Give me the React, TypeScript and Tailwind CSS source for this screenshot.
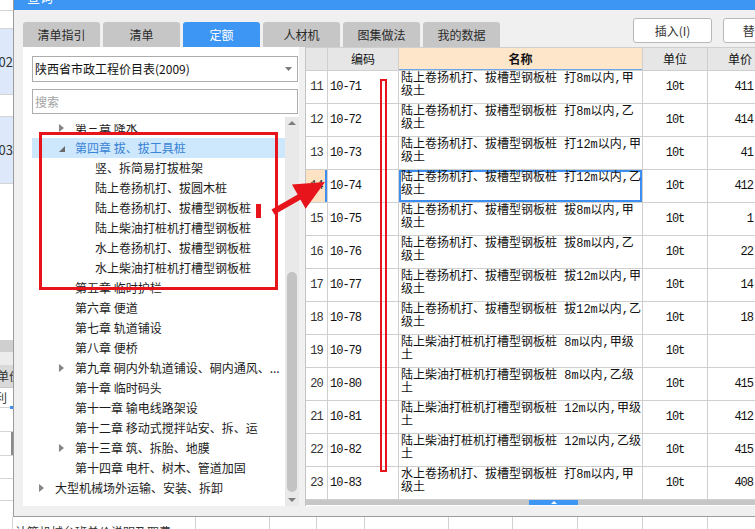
import React from 'react';

type TreeRow = {
  level: number;
  text: string;
  arrow?: 'right' | 'down';
  selected?: boolean;
};

const treeRows: TreeRow[] = [
  { level: 1, text: '第三章 降水', arrow: 'right' },
  { level: 1, text: '第四章 拔、拔工具桩', arrow: 'down', selected: true },
  { level: 2, text: '竖、拆简易打拔桩架' },
  { level: 2, text: '陆上卷扬机打、拔圆木桩' },
  { level: 2, text: '陆上卷扬机打、拔槽型钢板桩' },
  { level: 2, text: '陆上柴油打桩机打槽型钢板桩' },
  { level: 2, text: '水上卷扬机打、拔槽型钢板桩' },
  { level: 2, text: '水上柴油打桩机打槽型钢板桩' },
  { level: 1, text: '第五章 临时护栏' },
  { level: 1, text: '第六章 便道' },
  { level: 1, text: '第七章 轨道铺设' },
  { level: 1, text: '第八章 便桥' },
  { level: 1, text: '第九章 硐内外轨道铺设、硐内通风、...', arrow: 'right' },
  { level: 1, text: '第十章 临时码头' },
  { level: 1, text: '第十一章 输电线路架设' },
  { level: 1, text: '第十二章 移动式搅拌站安、拆、运' },
  { level: 1, text: '第十三章 筑、拆胎、地膜', arrow: 'right' },
  { level: 1, text: '第十四章 电杆、树木、管道加固' },
  { level: 0, text: '大型机械场外运输、安装、拆卸', arrow: 'right' },
];

// [序号, 编码, 名称第一行, 名称第二行, 单价(可见部分)]
const quotaRows: string[][] = [
  ['11', '10-71', '陆上卷扬机打、拔槽型钢板桩 打8m以内,甲', '级土', '411'],
  ['12', '10-72', '陆上卷扬机打、拔槽型钢板桩 打8m以内,乙', '级土', '414'],
  ['13', '10-73', '陆上卷扬机打、拔槽型钢板桩 打12m以内,甲', '级土', '41'],
  ['14', '10-74', '陆上卷扬机打、拔槽型钢板桩 打12m以内,乙', '级土', '412'],
  ['15', '10-75', '陆上卷扬机打、拔槽型钢板桩 拔8m以内,甲', '级土', '1'],
  ['16', '10-76', '陆上卷扬机打、拔槽型钢板桩 拔8m以内,乙', '级土', '22'],
  ['17', '10-77', '陆上卷扬机打、拔槽型钢板桩 拔12m以内,甲', '级土', '14'],
  ['18', '10-78', '陆上卷扬机打、拔槽型钢板桩 拔12m以内,乙', '级土', '18'],
  ['19', '10-79', '陆上柴油打桩机打槽型钢板桩 8m以内,甲级', '土', ''],
  ['20', '10-80', '陆上柴油打桩机打槽型钢板桩 8m以内,乙级', '土', '415'],
  ['21', '10-81', '陆上柴油打桩机打槽型钢板桩 12m以内,甲级', '土', '412'],
  ['22', '10-82', '陆上柴油打桩机打槽型钢板桩 12m以内,乙级', '土', '415'],
  ['23', '10-83', '水上卷扬机打、拔槽型钢板桩 打8m以内,甲', '级土', '408'],
];

const tabs = ['清单指引', '清单', '定额', '人材机', '图集做法', '我的数据'];

function BackStrip() {
  return (
    <div className="flex w-[13px] shrink-0 flex-col overflow-hidden bg-white text-[13px] text-[#333]">
      <div className="h-[11px] shrink-0 border-b border-[#d4d4d4]" />
      <div className="h-[18px] shrink-0 border-b border-[#d4d4d4]" />
      <div className="flex h-[66px] shrink-0 items-center justify-end border-b border-[#d4d4d4] bg-[#dde9fa] whitespace-nowrap">02</div>
      <div className="h-[22px] shrink-0 border-b border-[#d4d4d4]" />
      <div className="flex h-[67px] shrink-0 items-center justify-end border-b border-[#d4d4d4] bg-[#dde9fa] whitespace-nowrap">03</div>
      <div className="h-[156px] shrink-0" />
      <div className="h-[12px] shrink-0 bg-[#cfcfcf]" />
      <div className="h-[13px] shrink-0 bg-[#ececec]" />
      <div className="flex h-[23px] shrink-0 items-center border-b border-[#c8c8c8] bg-[#d9d9d9] whitespace-nowrap text-[12px]">
        <span className="ml-[-3px]">单价</span>
      </div>
      <div className="relative flex h-[20px] shrink-0 items-center border-b border-[#d4d4d4] whitespace-nowrap text-[12px]">
        <span className="ml-[-5px]">利</span>
        <div className="absolute bottom-[-2px] right-0 h-[3px] w-[3px] bg-[#3d8ff0]" />
      </div>
      <div className="h-[24px] shrink-0 border-b border-[#d4d4d4]" />
      <div className="flex h-[24px] shrink-0 justify-end border-b border-[#d4d4d4]">
        <div className="w-[2px] bg-[#8a8a8a]" />
      </div>
      <div className="h-[23px] shrink-0 border-b border-[#d4d4d4]" />
      <div className="h-[22px] shrink-0 border-b border-[#d4d4d4]" />
    </div>
  );
}

function TreeArrow({ kind }: { kind: 'right' | 'down' }) {
  if (kind === 'down') {
    return (
      <svg width="6" height="6" viewBox="0 0 6 6" className="mt-[2px]">
        <polygon points="6,0 6,6 0,6" fill="#6a6a6a" />
      </svg>
    );
  }
  return (
    <svg width="5" height="8" viewBox="0 0 5 8">
      <polygon points="0,0 5,4 0,8" fill="#858585" />
    </svg>
  );
}

function LeftPanel() {
  return (
    <div className="flex w-[276px] shrink-0 flex-col bg-white">
      <div className="ml-[9px] mt-[9px] flex h-[26px] w-[266px] items-center justify-between border border-[#adadad] pl-[2px] pr-[5px] text-[12px] text-[#111]">
        <span>陕西省市政工程价目表(2009)</span>
        <svg width="7" height="4" viewBox="0 0 7 4">
          <polygon points="0,0 7,0 3.5,4" fill="#7a7a7a" />
        </svg>
      </div>
      <div className="ml-[9px] mt-[7px] flex h-[25px] w-[266px] items-center border border-[#adadad] pl-[2px] text-[12px] text-[#a3a3a3]">
        搜索
      </div>
      <div className="mt-[3px] flex min-h-0 flex-1">
        <div className="ml-[9px] flex min-w-0 flex-1 flex-col pt-[7px]">
          <div className="min-h-0 flex-1 overflow-hidden">
            <div className="mt-[-6px]">
              {treeRows.map((row, i) => (
                <div
                  key={i}
                  className={`flex h-[20px] items-center whitespace-nowrap text-[12px] leading-[20px] ${
                    row.selected ? 'bg-[#cde7fc] text-[#3a84d6]' : 'text-[#1c1c1c]'
                  }`}
                  style={{ paddingLeft: 7 + row.level * 20 }}
                >
                  <div className="flex w-[16px] shrink-0 items-center">
                    {row.arrow && <TreeArrow kind={row.arrow} />}
                  </div>
                  <span>{row.text}</span>
                </div>
              ))}
            </div>
          </div>
        </div>
        <div className="flex w-[14px] shrink-0 flex-col bg-[#e9e9e9]">
          <div className="flex h-[12px] shrink-0 items-center justify-center">
            <svg width="8" height="4" viewBox="0 0 8 4">
              <polygon points="0,4 8,4 4,0" fill="#7d7d7d" />
            </svg>
          </div>
          <div className="h-[143px] shrink-0" />
          <div className="mx-[2px] h-[220px] shrink-0 rounded-full bg-[#c3c3c3]" />
          <div className="flex-1" />
          <div className="flex h-[12px] shrink-0 items-center justify-center">
            <svg width="8" height="4" viewBox="0 0 8 4">
              <polygon points="0,0 8,0 4,4" fill="#7d7d7d" />
            </svg>
          </div>
        </div>
      </div>
    </div>
  );
}

function QuotaTable() {
  return (
    <div className="flex shrink-0 flex-col border-l border-[#c4c4c4] bg-white">
      <div className="flex h-[24px] shrink-0 border-y border-[#cfcfcf] text-[12px] text-[#111]">
        <div className="w-[22px] shrink-0 border-r border-[#cfcfcf] bg-[#e6e6e6]" />
        <div className="flex w-[71px] shrink-0 items-center justify-center border-r border-[#cfcfcf] bg-[#e6e6e6]">编码</div>
        <div className="flex w-[244px] shrink-0 items-center justify-center border-r border-[#cfcfcf] bg-[#fde6c9] font-bold shadow-[inset_0_-1px_0_#68a6ee]">名称</div>
        <div className="flex w-[65px] shrink-0 items-center justify-center border-r border-[#cfcfcf] bg-[#e6e6e6]">单位</div>
        <div className="flex w-[64px] shrink-0 items-center justify-center bg-[#e6e6e6]">单价</div>
      </div>
      {quotaRows.map(([no, code, line1, line2, price]) => {
        const active = no === '14';
        return (
          <div
            key={no}
            className="flex h-[33px] shrink-0 border-b border-[#cfcfcf] font-['Liberation_Mono','Noto_Sans_CJK_SC',monospace] text-[12px] text-[#111]"
          >
            <div
              className={`flex w-[22px] shrink-0 items-center justify-center border-r border-[#cfcfcf] tracking-[-1px] text-[#333] ${
                active ? 'bg-[#fde3c3] shadow-[inset_-2px_0_0_#3c8ff0]' : ''
              }`}
            >
              {no}
            </div>
            <div className="flex w-[71px] shrink-0 items-center border-r border-[#cfcfcf] pl-[2px] tracking-[-1px]">{code}</div>
            <div
              className={`w-[244px] shrink-0 border-r border-[#cfcfcf] pl-[2px] pt-[2px] leading-[13px] whitespace-nowrap ${
                active ? 'shadow-[inset_0_0_0_2px_#3c8ff0]' : ''
              }`}
            >
              <div>{line1}</div>
              <div>{line2}</div>
            </div>
            <div className="flex w-[65px] shrink-0 items-center justify-center border-r border-[#cfcfcf] tracking-[-1px]">10t</div>
            <div className="flex w-[64px] shrink-0 items-center">
              <div className="w-[46px] pr-[1px] text-right tracking-[-1px]">{price}</div>
            </div>
          </div>
        );
      })}
      <div className="flex h-[5px] shrink-0 bg-[#c6c6c6]">
        <div className="ml-[223px] flex h-[5px] w-[49px] items-center justify-center bg-[#3e96f4]">
          <svg width="6" height="3" viewBox="0 0 6 3">
            <polygon points="0,3 6,3 3,0" fill="#ffffff" />
          </svg>
        </div>
      </div>
    </div>
  );
}

function BottomStrip() {
  const widths = [13, 183, 74, 47, 48, 84, 64, 65, 65, 65, 60];
  return (
    <div className="flex h-[12px] overflow-hidden bg-white">
      {widths.map((w, i) => (
        <div key={i} className="relative shrink-0 border-r border-[#d2d2d2]" style={{ width: w }}>
          {i === 1 && (
            <div className="absolute left-[2px] top-[9px] whitespace-nowrap text-[12px] leading-[12px] text-[#333]">
              计算机械台班单价说明及取费
            </div>
          )}
        </div>
      ))}
    </div>
  );
}

export default function App() {
  return (
    <div className="relative h-[529px] w-[755px] overflow-hidden bg-white font-['Noto_Sans_CJK_SC',sans-serif] text-[12px] text-[#1a1a1a]">
      <div className="flex h-[517px]">
        <BackStrip />
        <div className="flex min-w-0 flex-1 flex-col border-b border-l border-[#9c9c9c] bg-[#f0f0f0]">
          <div className="h-[10px] shrink-0 overflow-hidden bg-[#3e96f4] pl-[13px]">
            <div className="mt-[-10px] text-[13px] leading-[14px] text-white">查询</div>
          </div>

          <div className="flex h-[37px] shrink-0 pl-[9px]">
            <div className="mt-auto flex shrink-0 gap-[3px]">
              {tabs.map((t) => (
                <div
                  key={t}
                  className={`flex h-[25px] w-[77px] items-center justify-center rounded-t-[3px] text-[12px] ${
                    t === '定额' ? 'bg-[#3e96f4] text-white' : 'bg-[#c6c6c6] text-[#2a2a2a]'
                  }`}
                >
                  {t}
                </div>
              ))}
            </div>
            <div className="ml-[133px] mt-[8px] flex shrink-0 gap-[11px]">
              <div className="flex h-[25px] w-[79px] items-center justify-center rounded-[3px] border border-[#b8b8b8] bg-white text-[12px] text-[#333]">
                插入(I)
              </div>
              <div className="flex h-[25px] w-[79px] items-center justify-center rounded-[3px] border border-[#b8b8b8] bg-white text-[12px] text-[#333]">
                替换(R)
              </div>
            </div>
          </div>

          <div className="flex h-[459px] shrink-0 pl-[9px]">
            <LeftPanel />
            <div className="w-[6px] shrink-0" />
            <QuotaTable />
          </div>
        </div>
      </div>
      <BottomStrip />

      {/* red annotations */}
      <div className="pointer-events-none absolute left-[39px] top-[132px] h-[158px] w-[239px] border-[3px] border-[#e8141c]" />
      <div className="pointer-events-none absolute left-[256px] top-[204px] h-[14px] w-[5px] bg-[#e8141c]" />
      <div className="pointer-events-none absolute left-[380px] top-[79px] h-[393px] w-[7px] border-2 border-[#e8141c]" />
      <svg className="pointer-events-none absolute left-[268px] top-[176px]" width="62" height="42" viewBox="0 0 62 42">
        <line x1="5" y1="36" x2="33" y2="20" stroke="#e8141c" strokeWidth="6" />
        <polygon points="57,6 37.6,32.8 24,8.4" fill="#e8141c" />
      </svg>
    </div>
  );
}
